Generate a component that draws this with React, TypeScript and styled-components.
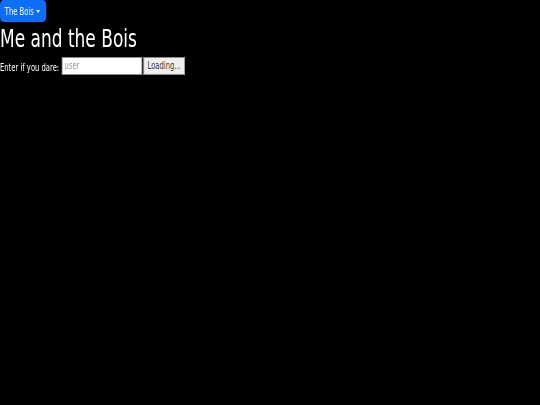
import * as React from 'react';
import styled, { createGlobalStyle } from 'styled-components';

// the reference is squeezed sideways, so the whole page is drawn wide and squeezed back
const SQUEEZE = 0.68;

const GlobalStyle = createGlobalStyle`
  html, body {
    margin: 0;
    padding: 0;
    background-color: #000;
  }
  body {
    color: #fff;
    font-family: 'DejaVu Sans', 'Liberation Sans', sans-serif;
    overflow: hidden;
  }
`;

const Stage = styled.div`
  width: ${100 / SQUEEZE}%;
  min-height: 405px;
  transform: scaleX(${SQUEEZE});
  transform-origin: 0 0;
  display: flex;
  flex-direction: column;
  align-items: flex-start;
`;

const Toggle = styled.button`
  display: flex;
  align-items: center;
  height: 22px;
  padding: 0 9px 0 7px;
  border: none;
  border-radius: 5px;
  background-color: #0d6efd;
  color: #fff;
  font-family: inherit;
  font-size: 10px;
  cursor: pointer;
`;

const Caret = styled.span`
  display: inline-block;
  margin-left: 3px;
  border-top: 3px solid #fff;
  border-left: 3px solid transparent;
  border-right: 3px solid transparent;
`;

const Title = styled.h1`
  margin: 0;
  font-size: 25px;
  font-weight: 400;
  line-height: 34px;
`;

const Form = styled.form`
  display: flex;
  align-items: center;
  height: 19px;
`;

const Label = styled.label`
  font-size: 10px;
  padding-top: 3px;
  margin-right: 4px;
`;

const Input = styled.input`
  box-sizing: border-box;
  width: 118px;
  height: 18px;
  margin: 0 2px 0 0;
  padding: 1px 3px;
  border: 1px solid #8a8a8a;
  background-color: #fff;
  font-family: inherit;
  font-size: 10px;
  &::placeholder {
    color: #9a9a9a;
  }
`;

const SubmitButton = styled.button`
  box-sizing: border-box;
  height: 18px;
  padding: 0 5px;
  border: 1px solid #8a8a8a;
  background-color: #efefef;
  color: #3a3a3a;
  font-family: inherit;
  font-size: 10px;
`;

const App = () => {
  return (
    <>
      <GlobalStyle />
      <Stage>
        <Toggle type="button">
          The Bois
          <Caret />
        </Toggle>
        <Title>Me and the Bois</Title>
        <Form onSubmit={e => e.preventDefault()}>
          <Label htmlFor="user">Enter if you dare:</Label>
          <Input id="user" placeholder="user" />
          <SubmitButton type="submit" disabled>
            Loading...
          </SubmitButton>
        </Form>
      </Stage>
    </>
  );
};

export default App;
